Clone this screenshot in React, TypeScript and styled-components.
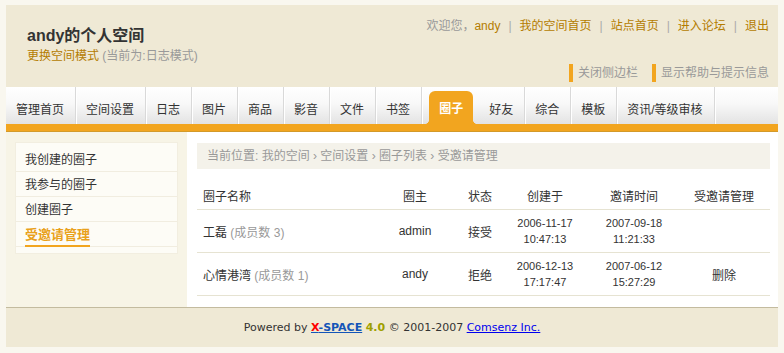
import React from 'react';
import styled, { createGlobalStyle } from 'styled-components';

const GlobalStyle = createGlobalStyle`
  body {
    margin: 0;
    background: #f9f7ef;
    font-family: 'Liberation Sans', 'Noto Sans CJK SC', sans-serif;
    font-size: 12px;
    color: #333;
  }
  a {
    text-decoration: none;
    cursor: pointer;
  }
`;

const orange = '#f2a51f';
const gold = '#b47c00';

const Page = styled.div`
  width: 772px;
  margin: 5px 0 6px 6px;
`;

const Header = styled.header`
  display: flex;
  justify-content: space-between;
  height: 82px;
  background: #efe9d5;
`;

const HeaderLeft = styled.div`
  padding: 21px 0 0 21px;
`;

const Title = styled.h1`
  margin: 0;
  font-size: 16px;
  line-height: 20px;
  font-weight: bold;
  color: #333;
`;

const ModeLine = styled.div`
  line-height: 20px;
`;

const GoldLink = styled.a`
  color: ${gold};
`;

const Muted = styled.span`
  color: #999;
`;

const HeaderRight = styled.div`
  display: flex;
  flex-direction: column;
  align-items: flex-end;
  justify-content: space-between;
  padding: 11px 9px 5px 0;
`;

const UserNav = styled.div`
  line-height: 20px;
  color: #999;
`;

const Sep = styled.span`
  margin: 0 8px;
  color: #aaa;
`;

const ToolLinks = styled.div`
  display: flex;
  gap: 14px;
`;

const ToolLink = styled.a`
  display: block;
  height: 18px;
  line-height: 18px;
  padding-left: 5px;
  border-left: 4px solid ${orange};
  color: #999;
`;

const TabBar = styled.nav`
  display: flex;
  height: 37px;
  background: linear-gradient(#ffffff 0%, #f8f8f8 45%, #e3e3e3 100%);
`;

const Tab = styled.a`
  display: flex;
  align-items: center;
  padding: 5px 11px 0 10px;
  border-right: 1px solid #d9d9d9;
  box-shadow: 1px 0 0 #ffffff;
  color: #333;
`;

const ActiveTab = styled.a`
  position: relative;
  align-self: flex-end;
  display: flex;
  align-items: center;
  height: 33px;
  margin: 0 6px 0 7px;
  padding: 0 10px;
  border-radius: 6px 6px 0 0;
  background: ${orange};
  color: #fff;
  font-weight: bold;

  &::before,
  &::after {
    content: '';
    position: absolute;
    bottom: 0;
    width: 5px;
    height: 5px;
  }
  &::before {
    left: -5px;
    background: radial-gradient(circle at 0 0, transparent 5px, ${orange} 5.5px);
  }
  &::after {
    right: -5px;
    background: radial-gradient(circle at 100% 0, transparent 5px, ${orange} 5.5px);
  }
`;

const OrangeBar = styled.div`
  height: 7px;
  background: ${orange};
  border-bottom: 1px solid #d39a2a;
`;

const Body = styled.div`
  display: flex;
`;

const Sidebar = styled.aside`
  width: 181px;
  flex-shrink: 0;
  box-sizing: border-box;
  padding: 10px 9px;
  background: #f7f4e6;
`;

const SideBox = styled.ul`
  margin: 0;
  padding: 4px 0 6px;
  list-style: none;
  background: #fdfcf6;
  border: 1px solid #f2eee0;
`;

const SideItem = styled.li<{ $active?: boolean }>`
  height: 25px;
  box-sizing: border-box;
  padding: ${p => (p.$active ? '6px 0 0 9px' : '2px 0 0 9px')};
  line-height: ${p => (p.$active ? 'normal' : '22px')};
  border-bottom: 1px solid #f1ede0;
`;

const SideLink = styled.a`
  color: #333;
`;

const ActiveLabel = styled.a`
  display: inline-block;
  line-height: 14px;
  padding-bottom: 3px;
  border-bottom: 2px solid ${orange};
  font-size: 13px;
  font-weight: bold;
  color: #e9a11a;
`;

const Main = styled.main`
  flex: 1;
  background: #fff;
  padding: 11px 8px 11px 10px;
`;

const Breadcrumb = styled.div`
  height: 26px;
  line-height: 27px;
  padding-left: 10px;
  background: #f4f2ea;
  color: #999;
`;

const columns = '186px 64px 66px 64px 114px 66px';

const HeadRow = styled.div`
  display: grid;
  grid-template-columns: ${columns};
  align-items: center;
  height: 29px;
  margin-top: 12px;
  box-sizing: border-box;
  border-bottom: 1px solid #e6e3d2;
`;

const Row = styled.div`
  display: grid;
  grid-template-columns: ${columns};
  align-items: center;
  height: 43px;
  box-sizing: border-box;
  border-bottom: 1px solid #e6e3d2;
`;

const Cell = styled.div<{ $left?: boolean }>`
  text-align: ${p => (p.$left ? 'left' : 'center')};
  padding-left: ${p => (p.$left ? '6px' : '0')};
`;

const Mono = styled(Cell)`
  font-size: 11px;
  line-height: 16px;
`;

const Footer = styled.footer`
  height: 39px;
  line-height: 39px;
  text-align: center;
  border-top: 1px solid #c3bb9f;
  background: #efe9d5;
  font-family: 'DejaVu Sans', sans-serif;
  font-size: 11px;
  color: #333;
`;

const Brand = styled.a`
  font-weight: bold;
  color: #1455b8;
  text-decoration: underline;
`;

const BrandX = styled.span`
  color: #f00;
`;

const Version = styled.b`
  color: #9fa000;
`;

const Company = styled.a`
  color: #0000ee;
  text-decoration: underline;
`;

const tabs = ['管理首页', '空间设置', '日志', '图片', '商品', '影音', '文件', '书签'];
const tabsAfter = ['好友', '综合', '模板', '资讯/等级审核'];

const sideItems = ['我创建的圈子', '我参与的圈子', '创建圈子'];

const invites = [
  { name: '工磊', members: 3, owner: 'admin', state: '接受', created: ['2006-11-17', '10:47:13'], invited: ['2007-09-18', '11:21:33'], action: '' },
  { name: '心情港湾', members: 1, owner: 'andy', state: '拒绝', created: ['2006-12-13', '17:17:47'], invited: ['2007-06-12', '15:27:29'], action: '删除' },
];

const crumbs = ['我的空间', '空间设置', '圈子列表', '受邀请管理'];

export default function App() {
  return (
    <>
      <GlobalStyle />
      <Page>
        <Header>
          <HeaderLeft>
            <Title>andy的个人空间</Title>
            <ModeLine>
              <GoldLink>更换空间模式</GoldLink> <Muted>(当前为:日志模式)</Muted>
            </ModeLine>
          </HeaderLeft>
          <HeaderRight>
            <UserNav>
              欢迎您，<GoldLink>andy</GoldLink>
              <Sep>|</Sep>
              <GoldLink>我的空间首页</GoldLink>
              <Sep>|</Sep>
              <GoldLink>站点首页</GoldLink>
              <Sep>|</Sep>
              <GoldLink>进入论坛</GoldLink>
              <Sep>|</Sep>
              <GoldLink>退出</GoldLink>
            </UserNav>
            <ToolLinks>
              <ToolLink>关闭侧边栏</ToolLink>
              <ToolLink>显示帮助与提示信息</ToolLink>
            </ToolLinks>
          </HeaderRight>
        </Header>

        <TabBar>
          {tabs.map(t => (
            <Tab key={t}>{t}</Tab>
          ))}
          <ActiveTab>圈子</ActiveTab>
          {tabsAfter.map(t => (
            <Tab key={t}>{t}</Tab>
          ))}
        </TabBar>
        <OrangeBar />

        <Body>
          <Sidebar>
            <SideBox>
              {sideItems.map(s => (
                <SideItem key={s}>
                  <SideLink>{s}</SideLink>
                </SideItem>
              ))}
              <SideItem $active>
                <ActiveLabel>受邀请管理</ActiveLabel>
              </SideItem>
            </SideBox>
          </Sidebar>

          <Main>
            <Breadcrumb>
              当前位置: {crumbs.join(' › ')}
            </Breadcrumb>
            <HeadRow>
              <Cell $left>圈子名称</Cell>
              <Cell>圈主</Cell>
              <Cell>状态</Cell>
              <Cell>创建于</Cell>
              <Cell>邀请时间</Cell>
              <Cell>受邀请管理</Cell>
            </HeadRow>
            {invites.map(r => (
              <Row key={r.name}>
                <Cell $left>
                  {r.name} <Muted>(成员数 {r.members})</Muted>
                </Cell>
                <Cell>{r.owner}</Cell>
                <Cell>{r.state}</Cell>
                <Mono>
                  {r.created[0]}
                  <br />
                  {r.created[1]}
                </Mono>
                <Mono>
                  {r.invited[0]}
                  <br />
                  {r.invited[1]}
                </Mono>
                <Cell>{r.action && <SideLink>{r.action}</SideLink>}</Cell>
              </Row>
            ))}
          </Main>
        </Body>

        <Footer>
          Powered by{' '}
          <Brand>
            <BrandX>X</BrandX>-SPACE
          </Brand>{' '}
          <Version>4.0</Version> © 2001-2007 <Company>Comsenz Inc.</Company>
        </Footer>
      </Page>
    </>
  );
}
